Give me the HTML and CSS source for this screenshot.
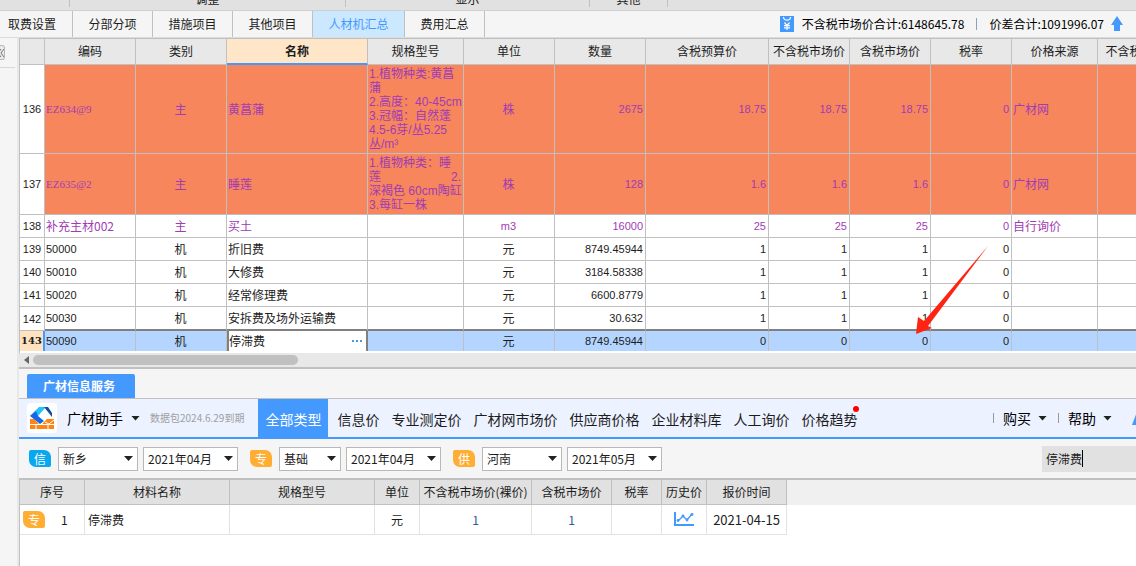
FILE: index.html
```html
<!DOCTYPE html>
<html lang="zh-CN">
<head>
<meta charset="utf-8">
<title>人材机汇总</title>
<link rel="stylesheet" href="styles.css">
</head>
<body>
<div class="app">
  <header class="ribbon">
    <span class="ribbon-group ribbon-first"></span>
    <span class="ribbon-group ribbon-adjust">调整</span>
    <span class="ribbon-group ribbon-show">显示</span>
    <span class="ribbon-group ribbon-other">其他</span>
  </header>

  <nav class="tabs">
    <button class="tab tab-first">取费设置</button>
    <button class="tab">分部分项</button>
    <button class="tab">措施项目</button>
    <button class="tab">其他项目</button>
    <button class="tab tab-wide tab-active">人材机汇总</button>
    <button class="tab">费用汇总</button>
    <div class="totals">
      <svg class="yen" width="14" height="16" viewBox="0 0 14 16"><path fill="#4499ff" d="M0 0h14v16H0z"/><path fill="none" stroke="#fff" stroke-width="1.200" d="M3.500 1c0 2 1.500 3.200 3.500 3.200S10.500 3 10.500 1M4.500 6.500L7 9.500l2.500-3M7 9.500V14M4 9.700h6M4 11.800h6"/></svg>
      <span>不含税市场价合计:6148645.78</span>
      <i class="totals-line"></i>
      <span>价差合计:1091996.07</span>
      <svg class="up" width="12" height="16" viewBox="0 0 12 16"><path fill="#4499ff" d="M6 0l6 9H9v6H3V9H0z"/></svg>
    </div>
  </nav>

  <div class="body">
    <aside class="side">
      <button class="collapse" aria-label="收起"><svg width="4" height="8" viewBox="2 0 4 8"><path d="M3 0L0 4l3 4M6 0L3 4l3 4" fill="none" stroke="#777"/></svg></button>
    </aside>

    <main class="main">
      <section class="grid">
        <table class="sheet">
          <colgroup><col class="w25"><col class="w91"><col class="w91"><col class="w141"><col class="w96"><col class="w91"><col class="w91"><col class="w123"><col class="w81"><col class="w81"><col class="w81"><col class="w86"><col class="w88"></colgroup>
          <thead>
            <tr><th></th><th>编码</th><th>类别</th><th class="picked">名称</th><th>规格型号</th><th>单位</th><th>数量</th><th>含税预算价</th><th>不含税市场价</th><th>含税市场价</th><th>税率</th><th>价格来源</th><th>不含税市场价</th></tr>
          </thead>
          <tbody>
            <tr class="tall hot main-item"><th>136</th><td class="code">EZ634@9</td><td class="mid">主</td><td>黄菖蒲</td><td class="spec">1.植物种类:黄菖<br>蒲<br>2.高度：40-45cm<br>3.冠幅：自然蓬<br>4.5-6芽/丛5.25<br>丛/m³</td><td class="mid">株</td><td class="num">2675</td><td class="num">18.75</td><td class="num">18.75</td><td class="num">18.75</td><td class="num">0</td><td>广材网</td><td></td></tr>
            <tr class="medium hot main-item"><th>137</th><td class="code">EZ635@2</td><td class="mid">主</td><td>睡莲</td><td class="spec">1.植物种类：睡<br><span class="split"><span>莲</span><span>2.</span></span>深褐色 60cm陶缸<br>3.每缸一株</td><td class="mid">株</td><td class="num">128</td><td class="num">1.6</td><td class="num">1.6</td><td class="num">1.6</td><td class="num">0</td><td>广材网</td><td></td></tr>
            <tr class="main-item"><th>138</th><td>补充主材002</td><td class="mid">主</td><td>买土</td><td></td><td class="mid small">m3</td><td class="num">16000</td><td class="num">25</td><td class="num">25</td><td class="num">25</td><td class="num">0</td><td>自行询价</td><td></td></tr>
            <tr><th>139</th><td class="small">50000</td><td class="mid">机</td><td>折旧费</td><td></td><td class="mid">元</td><td class="num">8749.45944</td><td class="num">1</td><td class="num">1</td><td class="num">1</td><td class="num">0</td><td></td><td></td></tr>
            <tr><th>140</th><td class="small">50010</td><td class="mid">机</td><td>大修费</td><td></td><td class="mid">元</td><td class="num">3184.58338</td><td class="num">1</td><td class="num">1</td><td class="num">1</td><td class="num">0</td><td></td><td></td></tr>
            <tr><th>141</th><td class="small">50020</td><td class="mid">机</td><td>经常修理费</td><td></td><td class="mid">元</td><td class="num">6600.8779</td><td class="num">1</td><td class="num">1</td><td class="num">1</td><td class="num">0</td><td></td><td></td></tr>
            <tr class="before-current"><th>142</th><td class="small">50030</td><td class="mid">机</td><td>安拆费及场外运输费</td><td></td><td class="mid">元</td><td class="num">30.632</td><td class="num">1</td><td class="num">1</td><td class="num">1</td><td class="num">0</td><td></td><td></td></tr>
            <tr class="current"><th>143</th><td class="small">50090</td><td class="mid">机</td><td class="editing"><div class="edit"><span>停滞费</span><button class="more" aria-label="更多"><svg width="11" height="2" viewBox="0 0 11 2"><path fill="#4a9ad8" d="M0 0h2v2H0zM4 0h2v2H4zM8 0h2v2H8z"/></svg></button></div></td><td></td><td class="mid">元</td><td class="num">8749.45944</td><td class="num">0</td><td class="num">0</td><td class="num">0</td><td class="num">0</td><td></td><td></td></tr>
          </tbody>
        </table>
        <svg class="pointer" width="74" height="90" viewBox="0 0 74 90"><path fill="#ff2314" d="M1 89L3 72l6 4L73 1 13 81l4 2z"/></svg>
      </section>
      <div class="scrollbar"><svg width="5" height="8" viewBox="0 0 5 8"><path fill="#666" d="M5 0v8L0 4z"/></svg><i class="thumb"></i></div>

      <section class="service">
        <div class="service-tabs"><button class="service-tab">广材信息服务</button></div>
        <nav class="helper">
          <svg class="logo" width="30" height="30" viewBox="0 0 30 30"><rect width="30" height="30" rx="4" fill="#fff"/><path fill="#ff8412" d="M3 16h4l5 5h3l5-5h7v10H3z"/><path stroke="#fff" stroke-width="1" fill="none" d="M3 21.500h24M9 21.500V26M15 16v5.500M21 21.500V26M18 19l4 2 5-4"/><path fill="#26c3f5" d="M3 13L12 4h7l-8 9z"/><path fill="#1468e8" d="M3 13l6-5 2 5 6 5-4 3z"/><path fill="#0f4da8" d="M17 4h4l4 6v4z"/></svg>
          <button class="brand">广材助手<i class="caret"></i></button>
          <span class="expires">数据包2024.6.29到期</span>
          <button class="kind kind-active">全部类型</button>
          <button class="kind">信息价</button>
          <button class="kind">专业测定价</button>
          <button class="kind">广材网市场价</button>
          <button class="kind">供应商价格</button>
          <button class="kind">企业材料库</button>
          <button class="kind">人工询价</button>
          <button class="kind kind-new">价格趋势<i class="dot"></i></button>
          <div class="menus">
            <button class="menu">购买<i class="caret"></i></button>
            <button class="menu">帮助<i class="caret"></i></button>
            <button class="menu menu-last" aria-label="通知"><svg width="12" height="13" viewBox="0 0 12 13"><path fill="#4499ff" d="M0 13L5 0h7v13z"/></svg></button>
          </div>
        </nav>

        <form class="filters">
          <span class="badge badge-blue">信</span>
          <label class="pick pick-m"><select aria-label="信息价地区"><option>新乡</option></select></label>
          <label class="pick pick-l"><select aria-label="信息价月份"><option>2021年04月</option></select></label>
          <span class="badge badge-next">专</span>
          <label class="pick pick-s"><select aria-label="专业测定价类别"><option>基础</option></select></label>
          <label class="pick pick-l"><select aria-label="专业测定价月份"><option>2021年04月</option></select></label>
          <span class="badge badge-next">供</span>
          <label class="pick pick-m"><select aria-label="供应商地区"><option>河南</option></select></label>
          <label class="pick pick-l"><select aria-label="供应商月份"><option>2021年05月</option></select></label>
          <label class="search"><input type="text" value="停滞费" aria-label="搜索材料"><i class="cursor"></i></label>
        </form>

        <div class="results">
          <div class="results-head">
          <table class="prices">
            <colgroup><col class="w65"><col class="w145"><col class="w145"><col class="w45"><col class="w112"><col class="w80"><col class="w50"><col class="w45"><col class="w80"></colgroup>
            <thead><tr><th>序号</th><th>材料名称</th><th>规格型号</th><th>单位</th><th>不含税市场价(裸价)</th><th>含税市场价</th><th>税率</th><th>历史价</th><th>报价时间</th></tr></thead>
            <tbody><tr><td class="order"><div class="order-row"><span class="badge">专</span><span>1</span></div></td><td class="left">停滞费</td><td></td><td>元</td><td class="link">1</td><td class="link">1</td><td></td><td><svg class="chart" width="20" height="15" viewBox="0 0 20 15"><path fill="none" stroke="#4499ff" stroke-width="2" d="M1 0v13h19"/><path fill="none" stroke="#4499ff" stroke-width="1.400" d="M4 9l5-5 4 4 5-6"/><g fill="#4499ff"><circle cx="4" cy="8.500" r="1.400"/><circle cx="9" cy="4" r="1.400"/><circle cx="13" cy="8" r="1.400"/><circle cx="18" cy="2.500" r="1.400"/></g></svg></td><td class="date">2021-04-15</td></tr></tbody>
          </table>
          </div>
        </div>
      </section>
    </main>
  </div>
</div>
</body>
</html>
```

FILE: styles.css
```css
* { box-sizing: border-box; }
html, body { height: 100%; margin: 0; }
body {
  overflow: hidden;
  background: #f5f5f5;
  color: #1c1c1c;
  font: 12px/16px "Noto Sans CJK SC", sans-serif;
  white-space: nowrap;
}
button, select, input { font: inherit; color: inherit; border: 0; padding: 0; margin: 0; background: none; }
svg { display: block; flex: none; }

.app { min-height: 100%; display: flex; flex-direction: column; }

.ribbon { display: flex; align-items: flex-end; height: 11px; overflow: hidden; background: #e1e1e1; border-bottom: 1px solid #cfcfcf; }
.ribbon-group { display: flex; align-items: flex-end; justify-content: center; height: 32px; margin-bottom: 3px; border-right: 1px solid #c0c0c0; }
.ribbon-first { width: 70px; }
.ribbon-adjust { width: 276px; }
.ribbon-show { width: 244px; }
.ribbon-other { width: 78px; }

.tabs { display: flex; height: 27px; border-bottom: 1px solid #dcdcdc; }
.tab { flex: none; width: 80px; border-right: 1px solid #c0c0c0; }
.tab-first { width: 73px; padding-right: 8px; }
.tab-wide { width: 92px; }
.tab-active { background: #cce8ff; color: #4499ff; }
.totals { display: flex; align-items: center; margin-left: auto; padding-right: 13px; color: #000; }
.yen { margin-right: 8px; }
.totals-line { width: 1px; height: 12px; margin: 0 12px; background: #8ca0c0; }
.up { margin-left: 7px; }

.body { flex: 1; display: flex; }
.side { flex: none; width: 19px; padding-top: 7px; border-right: 2px solid #e8e8e8; }
.collapse { display: flex; align-items: center; justify-content: flex-start; width: 5px; height: 15px; border: 1px solid #b8b8b8; border-left: 0; border-radius: 0 3px 3px 0; background: #eaeaea; overflow: hidden; }
.side::after { content: ""; display: block; width: 15px; height: 1px; margin-top: 7px; background: #d8d8d8; }
.main { flex: 1; min-width: 0; display: flex; flex-direction: column; }

.grid { position: relative; overflow: hidden; background: #fff; border: 1px solid #c0c0c0; border-width: 1px 0 0 1px; padding-bottom: 2px; }
.sheet, .prices { table-layout: fixed; border-collapse: separate; border-spacing: 0; }
.sheet { width: 1166px; }
.w25 { width: 25px; } .w45 { width: 45px; } .w50 { width: 50px; } .w65 { width: 65px; }
.w80 { width: 80px; } .w81 { width: 81px; } .w86 { width: 86px; } .w88 { width: 88px; }
.w91 { width: 91px; } .w96 { width: 96px; } .w112 { width: 112px; } .w123 { width: 123px; }
.w141 { width: 141px; } .w145 { width: 145px; }
.sheet th, .sheet td { height: 23px; padding: 0 2px 1px 1px; border: 1px solid #c0c0c0; border-width: 0 1px 1px 0; text-align: left; font-weight: 400; }
.sheet thead th { height: 26px; padding: 0 0 1px; text-align: center; background: #e8e8e8; }
.sheet thead .picked { background: #ffe6c8; font-weight: 700; border-bottom: 2px solid #4499ff; }
.sheet tbody th { padding: 0; text-align: center; font-family: "Liberation Sans", sans-serif; font-size: 11px; }
.sheet .mid { text-align: center; }
.sheet .num, .sheet .small { font-family: "Liberation Sans", sans-serif; font-size: 11px; }
.sheet .num { text-align: right; }
.sheet .code { font-family: "Liberation Serif", serif; font-size: 11px; }
.sheet .spec { font-family: "Liberation Sans", "Noto Sans CJK SC", sans-serif; line-height: 14px; }
.split { display: flex; justify-content: space-between; }
.main-item td { color: #a03cb4; }
.hot td { background: #f8865c; }
.sheet .tall td { height: 89px; }
.sheet .medium td { height: 61px; }
.sheet .before-current td { height: 24px; border-bottom: 2px solid #808080; }
.sheet .current td, .sheet .current th { height: 20px; border-bottom: 0; }
.current td { background: #b3d5ff; }
.sheet .current th { background: #ffe3c0; border-right: 2px solid #4499ff; font: 700 10px/16px "DejaVu Serif", serif; }
.sheet .current .editing { background: #fff; padding-left: 0; border: 2px solid #808080; border-width: 0 2px; }
.edit { display: flex; align-items: center; justify-content: space-between; }
.more { padding: 4px 1px; }
.pointer { position: absolute; left: 895px; top: 206px; }

.scrollbar { display: flex; align-items: center; height: 16px; padding: 0 8px 0 5px; gap: 4px; background: #e8e8e8; border-bottom: 2px solid #c0c0c0; }
.thumb { width: 24%; height: 10px; border-radius: 5px; background: #c0c0c0; }

.service { flex: 1; display: flex; flex-direction: column; }
.service-tabs { display: flex; padding: 5px 8px 0; border-bottom: 1px solid #c0c0c0; }
.service-tab { height: 24px; padding: 0 20px 0 16px; border-radius: 2px 2px 0 0; background: #4499ff; color: #fff; font-weight: 700; }
.helper { display: flex; align-items: center; height: 40px; padding-left: 8px; background: #ecf2ff; border-bottom: 2px solid #4499ff; font-size: 14px; line-height: 20px; }
.brand { display: flex; align-items: center; gap: 8px; margin: 0 10px; color: #000; }
.caret { width: 9px; height: 5px; background: #222; clip-path: polygon(0 0, 100% 0, 50% 100%); }
.expires { margin-right: 14px; font-size: 10px; color: #a0a0a0; }
.kind { align-self: stretch; padding: 2px 6px 0; }
.kind-active { padding: 2px 7px 0; margin-right: 3px; background: #4499ff; color: #fff; }
.kind-new { position: relative; }
.dot { position: absolute; top: 7px; right: 4px; width: 6px; height: 6px; border-radius: 50%; background: #f00; }
.menus { display: flex; margin-left: auto; overflow: hidden; }
.menu { display: flex; align-items: center; gap: 7px; padding: 0 11px 0 9px; color: #000; }
.menu::before { content: ""; width: 1px; height: 10px; margin-right: 2px; margin-left: -9px; background: #999; }
.menu-last { width: 13px; padding-right: 0; overflow: hidden; }

.filters { display: flex; align-items: center; height: 39px; padding-left: 10px; }
.badge { flex: none; width: 22px; height: 17px; border-radius: 2px 7px 2px 7px; background: #ffad33; color: #fff; text-align: center; line-height: 17px; }
.badge-blue { background: #08a8f0; }
.badge-next { margin-left: 12px; }
.pick { display: grid; align-items: center; height: 24px; margin-left: 5px; border: 1px solid #b8b8b8; background: #fff; }
.badge + .pick { margin-left: 7px; }
.pick select, .pick::after { grid-area: 1 / 1; }
.pick select { appearance: none; width: 100%; height: 22px; padding-left: 4px; }
.pick::after { content: ""; justify-self: end; width: 9px; height: 5px; margin-right: 4px; background: #222; clip-path: polygon(0 0, 100% 0, 50% 100%); pointer-events: none; }
.pick-s { width: 62px; }
.pick-m { width: 80px; }
.pick-l { width: 95px; }
.search { display: flex; align-items: center; width: 94px; height: 26px; margin-left: auto; padding-left: 4px; background: #e1e1e1; }
.search input { width: 36px; outline: 0; }
.cursor { width: 1px; height: 17px; background: #000; }

.results { flex: 1; background: #fff; border: 1px solid #c0c0c0; border-width: 2px 0 0 1px; }
.results-head { background: linear-gradient(#f0f0f0 25px, #fff 25px); }
.prices { width: 767px; }
.prices th { height: 25px; padding: 0; background: #e1e1e1; border: 1px solid #c0c0c0; border-width: 0 1px 1px 0; font-weight: 400; }
.prices td { height: 30px; padding: 0; text-align: center; background: #fff; border: 1px solid #e2e2e2; border-width: 0 1px 1px 0; }
.prices .left { padding-left: 3px; text-align: left; }
.order-row { display: flex; align-items: center; gap: 16px; padding-left: 3px; }
.prices .link { color: #2a5a9c; }
.prices .date { font-size: 13px; }
.chart { margin: 0 auto; }
```
